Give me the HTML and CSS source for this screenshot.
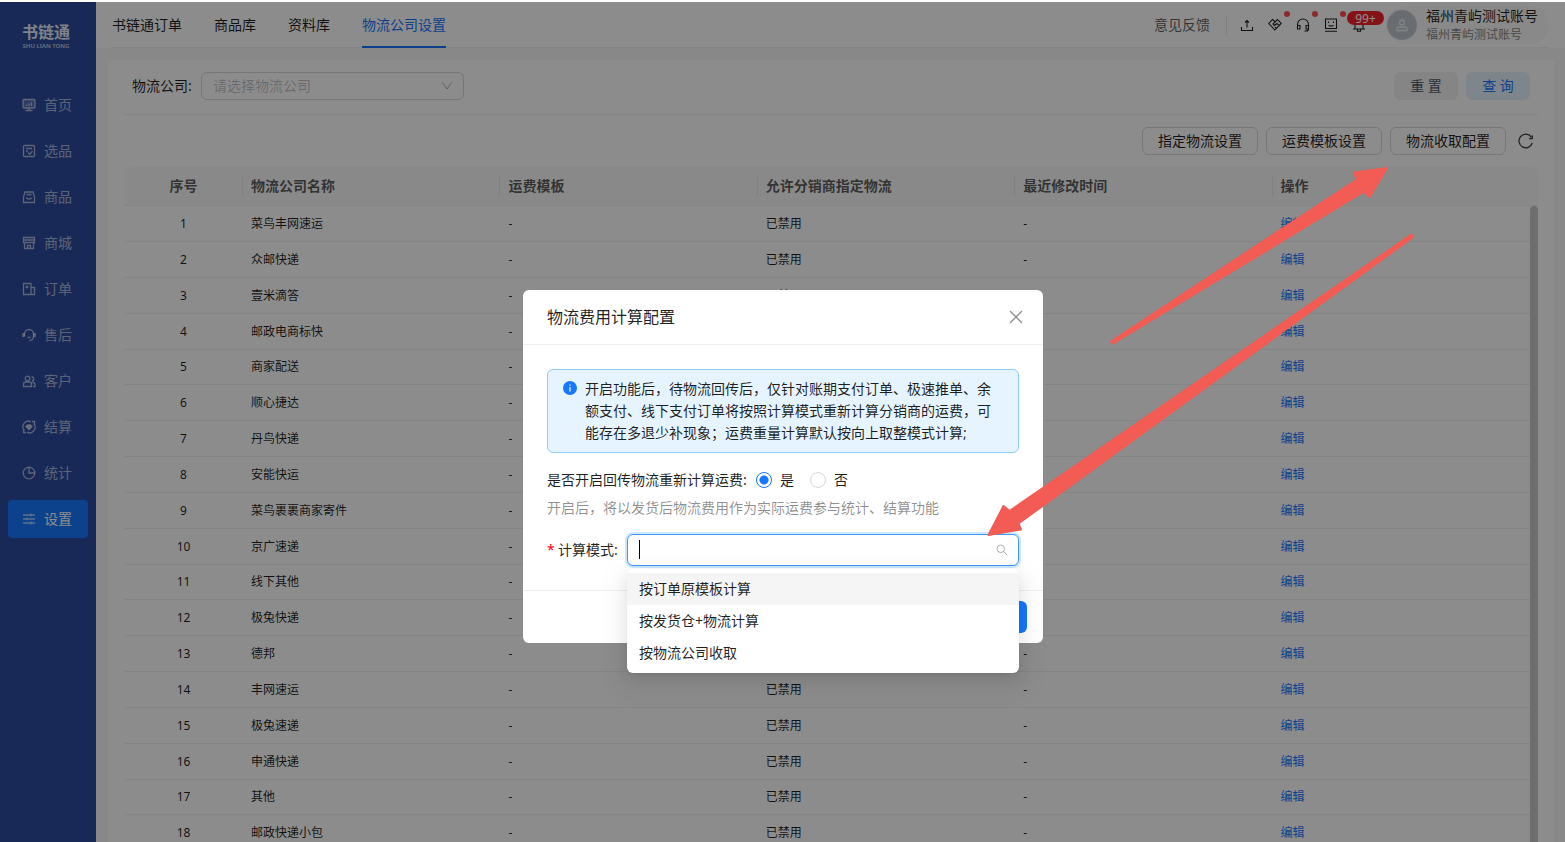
FILE: index.html
```html
<!DOCTYPE html>
<html lang="zh-CN">
<head>
<meta charset="utf-8">
<title>物流公司设置</title>
<link rel="stylesheet" href="styles.css">
</head>
<body>
<div class="app">
  <aside class="sidebar">
    <div class="logo"><span class="logo-name">书链通</span><span class="logo-sub">SHU LIAN TONG</span></div>
    <nav class="menu">
      <a class="menu-item" href="#"><svg class="menu-icon" viewBox="0 0 14 14"><rect x="1" y="1.500" width="12" height="8.500" rx="1" fill="currentColor" fill-opacity=".3"/><path d="M4.500 8V6.500M7 8V5.500M9.500 8V4M3.500 12.500h7M7 10v2.500"/></svg>首页</a>
      <a class="menu-item" href="#"><svg class="menu-icon" viewBox="0 0 14 14"><rect x="1.500" y="1.500" width="11" height="11" rx="1"/><path d="M4 4.500h6M4 7h2M6 8.500l1.800 1.800L10.500 7"/></svg>选品</a>
      <a class="menu-item" href="#"><svg class="menu-icon" viewBox="0 0 14 14"><path d="M3 2h8l1.500 5v5.500h-11V7zM4.500 7.500q0 1.500 2.500 1.500t2.500-1.500M4.500 4.500h5"/></svg>商品</a>
      <a class="menu-item" href="#"><svg class="menu-icon" viewBox="0 0 14 14"><path d="M1.500 6.500v-5h11v5zM1.500 4h11M2.500 6.500v6h9v-6M5.500 12.500V9.500h3v3"/></svg>商城</a>
      <a class="menu-item" href="#"><svg class="menu-icon" viewBox="0 0 14 14"><path d="M9 5.500v-4H1.500v11h11v-7H9v7M3.500 5h3M5 3.500v3"/></svg>订单</a>
      <a class="menu-item" href="#"><svg class="menu-icon" viewBox="0 0 14 14"><path d="M2.500 8V6a4.500 4.500 0 0 1 9 0v2c0 3-1.500 4.500-4 4.500M5.500 9q1.500 1 3 0"/><path d="M1.500 5v4M12.500 5v4" stroke-width="2.500"/></svg>售后</a>
      <a class="menu-item" href="#"><svg class="menu-icon" viewBox="0 0 14 14"><circle cx="5.500" cy="4.500" r="2.300"/><path d="M1.500 12.500V10q0-2 2-2h4q2 0 2 2v2.500zM9.500 3a2 2 0 0 1 .5 4M10.500 8.500q2.500 0 2.500 2v2h-2"/></svg>客户</a>
      <a class="menu-item" href="#"><svg class="menu-icon" viewBox="0 0 14 14"><path d="M2.500 10.500A5.500 5.500 0 0 1 9 1.800M11.500 3.500A5.500 5.500 0 0 1 5 12.200M1.500 9v3.500H4M12.500 5V1.500H10"/><path d="M5.500 5h3L10 6.500 7 9.500 4 6.500z" fill="currentColor"/></svg>结算</a>
      <a class="menu-item" href="#"><svg class="menu-icon" viewBox="0 0 14 14"><circle cx="7" cy="7" r="5.800"/><path d="M7 1.500V7h5.500"/></svg>统计</a>
      <a class="menu-item menu-item-active" href="#"><svg class="menu-icon menu-icon-soft" viewBox="0 0 14 14"><path d="M1 3h12M1 7h12M1 11h12M9 1.500v3M5 5.500v3M9 9.500v3"/></svg>设置</a>
    </nav>
  </aside>

  <div class="workspace">
    <header class="topbar">
      <nav class="tabs">
        <a class="tab" href="#">书链通订单</a>
        <a class="tab" href="#">商品库</a>
        <a class="tab" href="#">资料库</a>
        <a class="tab tab-active" href="#">物流公司设置</a>
      </nav>
      <div class="tools">
        <a class="feedback" href="#">意见反馈</a>
        <button class="tool" type="button" aria-label="上传"><svg viewBox="0 0 14 14"><path d="M1.500 9v3.500h11V9M7 9.500V2.500M5 4.500l2-2 2 2"/></svg></button>
        <button class="tool" type="button" aria-label="合作"><svg viewBox="0 0 14 14"><path d="M7 3.500L4.500 1.500.800 5.500l6 6.500 6.400-6.500-3.700-4L5 6l1.500 1.500L9 5.500l2.500 2.300M7 9l1.500 1.500"/></svg><span class="dot"></span></button>
        <button class="tool" type="button" aria-label="客服"><svg viewBox="0 0 14 14"><path d="M1.500 11V6.500a5.500 5.500 0 0 1 11 0V11q0 2-2.500 2H8.500M1.500 7.500H4V11H1.500zM10 7.500h2.500V11H10z"/></svg><span class="dot"></span></button>
        <button class="tool" type="button" aria-label="助手"><svg viewBox="0 0 14 14"><path d="M1.500 1h11v9.500h-11zM1 13.300h12M4.500 3.500v1.500M9.500 3.500v1.500M4.500 7.500q2.500 1 5 0"/></svg><span class="dot"></span></button>
        <button class="tool" type="button" aria-label="通知"><svg viewBox="0 0 14 14"><path d="M3 11V6a4 4 0 0 1 8 0v5M1 11h12M5.500 11v2.300h3V11"/></svg><span class="count">99+</span></button>
        <div class="account">
          <span class="avatar"><svg viewBox="0 0 14 14"><circle cx="7" cy="4.500" r="2.500"/><path d="M2 12.500v-1.500q0-2 2-2h6q2 0 2 2v1.500z"/></svg></span>
          <span class="account-text"><span class="account-name">福州青屿测试账号</span><span class="account-sub">福州青屿测试账号</span></span>
        </div>
      </div>
    </header>

    <main class="content">
      <section class="card">
        <form class="search">
          <label class="search-label" for="company">物流公司:</label>
          <span class="select-wrap">
            <select class="company-select" id="company"><option>请选择物流公司</option></select>
            <svg class="chevron" viewBox="0 0 12 12"><path d="M1.500 2.500L6 9l4.500-6.500"/></svg>
          </span>
          <span class="search-actions">
            <button class="btn btn-reset" type="reset">重 置</button>
            <button class="btn btn-query" type="button">查 询</button>
          </span>
        </form>
        <div class="toolbar">
          <button class="btn" type="button">指定物流设置</button>
          <button class="btn" type="button">运费模板设置</button>
          <button class="btn" type="button">物流收取配置</button>
          <button class="reload" type="button" aria-label="刷新"><svg viewBox="0 0 16 16"><path d="M14.300 10A6.800 6.800 0 1 1 13.200 3.800M14.300 2.200v3.300h-3.200"/></svg></button>
        </div>
        <div class="table-area">
          <table class="grid">
            <colgroup><col class="col-index"><col><col><col><col><col><col class="col-gutter"></colgroup>
            <thead><tr><th>序号</th><th>物流公司名称</th><th>运费模板</th><th>允许分销商指定物流</th><th>最近修改时间</th><th>操作</th><th></th></tr></thead>
            <tbody>
              <tr><td>1</td><td>菜鸟丰网速运</td><td>-</td><td>已禁用</td><td>-</td><td><a href="#">编辑</a></td><td></td></tr>
              <tr><td>2</td><td>众邮快递</td><td>-</td><td>已禁用</td><td>-</td><td><a href="#">编辑</a></td><td></td></tr>
              <tr><td>3</td><td>壹米滴答</td><td>-</td><td>已禁用</td><td>-</td><td><a href="#">编辑</a></td><td></td></tr>
              <tr><td>4</td><td>邮政电商标快</td><td>-</td><td>已禁用</td><td>-</td><td><a href="#">编辑</a></td><td></td></tr>
              <tr><td>5</td><td>商家配送</td><td>-</td><td>已禁用</td><td>-</td><td><a href="#">编辑</a></td><td></td></tr>
              <tr><td>6</td><td>顺心捷达</td><td>-</td><td>已禁用</td><td>-</td><td><a href="#">编辑</a></td><td></td></tr>
              <tr><td>7</td><td>丹鸟快递</td><td>-</td><td>已禁用</td><td>-</td><td><a href="#">编辑</a></td><td></td></tr>
              <tr><td>8</td><td>安能快运</td><td>-</td><td>已禁用</td><td>-</td><td><a href="#">编辑</a></td><td></td></tr>
              <tr><td>9</td><td>菜鸟裹裹商家寄件</td><td>-</td><td>已禁用</td><td>-</td><td><a href="#">编辑</a></td><td></td></tr>
              <tr><td>10</td><td>京广速递</td><td>-</td><td>已禁用</td><td>-</td><td><a href="#">编辑</a></td><td></td></tr>
              <tr><td>11</td><td>线下其他</td><td>-</td><td>已禁用</td><td>-</td><td><a href="#">编辑</a></td><td></td></tr>
              <tr><td>12</td><td>极兔快递</td><td>-</td><td>已禁用</td><td>-</td><td><a href="#">编辑</a></td><td></td></tr>
              <tr><td>13</td><td>德邦</td><td>-</td><td>已禁用</td><td>-</td><td><a href="#">编辑</a></td><td></td></tr>
              <tr><td>14</td><td>丰网速运</td><td>-</td><td>已禁用</td><td>-</td><td><a href="#">编辑</a></td><td></td></tr>
              <tr><td>15</td><td>极兔速递</td><td>-</td><td>已禁用</td><td>-</td><td><a href="#">编辑</a></td><td></td></tr>
              <tr><td>16</td><td>申通快递</td><td>-</td><td>已禁用</td><td>-</td><td><a href="#">编辑</a></td><td></td></tr>
              <tr><td>17</td><td>其他</td><td>-</td><td>已禁用</td><td>-</td><td><a href="#">编辑</a></td><td></td></tr>
              <tr><td>18</td><td>邮政快递小包</td><td>-</td><td>已禁用</td><td>-</td><td><a href="#">编辑</a></td><td></td></tr>
            </tbody>
          </table>
          <span class="scroll-thumb"></span>
        </div>
      </section>
    </main>
  </div>
</div>

<div class="mask">
  <div class="dialog" role="dialog" aria-labelledby="dialog-title">
    <div class="dialog-head">
      <h2 class="dialog-title" id="dialog-title">物流费用计算配置</h2>
      <button class="close" type="button" aria-label="关闭"><svg viewBox="0 0 14 14"><path d="M1 1l12 12M13 1L1 13"/></svg></button>
    </div>
    <div class="dialog-body">
      <div class="notice">
        <svg class="notice-icon" viewBox="0 0 14 14"><circle cx="7" cy="7" r="7" fill="#1677ff" stroke="none"/><path d="M7 6v4.500M7 3.500v1.300" stroke="#fff" stroke-width="1.200"/></svg>
        <p class="notice-text">开启功能后，待物流回传后，仅针对账期支付订单、极速推单、余额支付、线下支付订单将按照计算模式重新计算分销商的运费，可能存在多退少补现象；运费重量计算默认按向上取整模式计算;</p>
      </div>
      <div class="radio-row" role="radiogroup" aria-labelledby="recalc">
        <span class="radio-title" id="recalc">是否开启回传物流重新计算运费:</span>
        <label class="radio"><input type="radio" name="recalc" checked>是</label>
        <label class="radio"><input type="radio" name="recalc">否</label>
      </div>
      <p class="hint">开启后，将以发货后物流费用作为实际运费参与统计、结算功能</p>
      <div class="mode-row">
        <label class="mode-label" for="mode"><span class="required">*</span>计算模式:</label>
        <div class="mode-field">
          <input class="mode-input" id="mode" type="text" role="combobox" aria-expanded="true" aria-controls="mode-list">
          <span class="caret"></span>
          <svg class="search-icon" viewBox="0 0 12 12"><circle cx="4.800" cy="4.800" r="3.800"/><path d="M7.600 7.600L11.300 11.300"/></svg>
          <ul class="options" id="mode-list" role="listbox">
            <li class="option option-active" role="option">按订单原模板计算</li>
            <li class="option" role="option">按发货仓+物流计算</li>
            <li class="option" role="option">按物流公司收取</li>
          </ul>
        </div>
      </div>
    </div>
    <div class="dialog-foot"><button class="confirm" type="button" aria-label="确定"></button></div>
  </div>
</div>

<svg class="arrows" viewBox="0 0 1565 842" width="1565" height="842" aria-hidden="true">
  <path d="M1111 341.500L1357 179.500 1354 172.500 1387 168 1369.500 197 1364 191.500 1113 343.500z"/>
  <path d="M1411.500 234.500L1009.500 511 1003.500 506 988.500 535 1021 529.500 1018.500 523.500 1413 237z"/>
</svg>
</body>
</html>
```

FILE: styles.css
```css
* { box-sizing: border-box; }

body {
  margin: 0;
  height: 100vh;
  padding-top: 2px;
  overflow: hidden;
  position: relative;
  background: #fcfcfc;
  color: rgba(0, 0, 0, 0.88);
  font: 14px/22px "Noto Sans", "Noto Sans CJK SC", sans-serif;
}

a { color: inherit; text-decoration: none; }
button, input, select { font: inherit; color: inherit; margin: 0; }
button { padding: 0; border: 0; background: none; }
svg { display: block; fill: none; stroke: currentColor; }
p, h2, ul { margin: 0; padding: 0; }

.app { display: flex; height: 100%; background: #f7f7f7; }

/* Sidebar */
.sidebar { width: 96px; flex: none; background: #2c4ba0; color: rgba(255, 255, 255, 0.6); }
.logo {
  height: 80px;
  padding: 20px 4px 0 0;
  display: flex;
  flex-direction: column;
  align-items: center;
  color: #e8ebf4;
}
.logo-name { font-size: 16px; line-height: 21px; font-weight: 700; }
.logo-sub { font-size: 6px; line-height: 6px; font-weight: 600; opacity: 0.8; white-space: nowrap; }
.menu { display: flex; flex-direction: column; gap: 8px; padding: 4px 8px; }
.menu-item { display: flex; align-items: center; gap: 8px; height: 38px; padding-left: 14px; border-radius: 4px; }
.menu-item-active { background: #1677ff; color: #fff; }
.menu-icon { width: 14px; height: 14px; stroke-width: 1.3; }
.menu-icon-soft { opacity: 0.65; }

/* Top bar */
.workspace { flex: 1; min-width: 0; display: flex; flex-direction: column; }
.topbar {
  display: flex;
  justify-content: space-between;
  height: 46px;
  flex: none;
  padding: 0 16px;
  background: #fff;
}
.tabs { flex: 1; display: flex; gap: 32px; border-bottom: 1px solid #f0f0f0; }
.tab { height: 46px; line-height: 46px; }
.tab-active { color: #1677ff; border-bottom: 2px solid #1677ff; }
.tools { display: flex; align-items: center; border-bottom: 1px solid #f0f0f0; }
.feedback { color: rgba(0, 0, 0, 0.65); padding-right: 16px; margin-right: 6px; border-right: 1px solid #e6e6e6; line-height: 20px; }
.tool { position: relative; width: 28px; height: 28px; display: grid; place-items: center; }
.tool svg { width: 14px; height: 14px; stroke-width: 1.1; }
.dot { position: absolute; top: 0; right: -1px; width: 6px; height: 6px; border-radius: 50%; background: #ff4d4f; }
.count {
  position: absolute;
  top: 0;
  left: 2px;
  width: 37px;
  height: 14px;
  border-radius: 7px;
  background: #f5222d;
  color: #fff;
  font-size: 12px;
  line-height: 15px;
}
.account { display: flex; align-items: center; gap: 9px; width: 162px; height: 38px; margin-left: 14px; border-radius: 19px; background: #fafafa; }
.avatar { width: 30px; height: 30px; border-radius: 50%; background: #bfc7ce; color: #eee; display: grid; place-items: center; flex: none; }
.avatar svg { width: 14px; height: 14px; stroke-width: 1.3; }
.account-text { display: flex; flex-direction: column; white-space: nowrap; }
.account-name { line-height: 19px; }
.account-sub { font-size: 12px; line-height: 19px; color: rgba(0, 0, 0, 0.5); }

/* Search and toolbar */
.content { flex: 1; min-height: 0; padding: 12px 11px 0 12px; }
.card { height: 100%; padding: 12px 16px 0; background: #fff; }
.search { display: flex; align-items: center; padding: 0 8px 14px; border-bottom: 1px solid #f0f0f0; }
.search-label { width: 69px; }
.select-wrap { position: relative; width: 263px; }
.company-select {
  display: block;
  appearance: none;
  width: 100%;
  height: 28px;
  padding: 0 11px;
  border: 1px solid #d9d9d9;
  border-radius: 6px;
  background: #fff;
  color: rgba(0, 0, 0, 0.25);
}
.chevron { position: absolute; right: 11px; top: 8px; width: 12px; height: 12px; color: rgba(0, 0, 0, 0.3); }
.search-actions { display: flex; gap: 8px; margin-left: auto; }
.toolbar { display: flex; justify-content: flex-end; align-items: center; gap: 8px; padding: 12px 0; }
.btn { height: 28px; padding: 0 15px; border: 1px solid #d9d9d9; border-radius: 6px; background: #fff; line-height: 26px; }
.btn-reset { width: 64px; border-color: #f2f3f5; background: #f2f3f5; color: #4e5969; }
.btn-query { width: 64px; border-color: #e6f4ff; background: #e6f4ff; color: #1677ff; }
.reload { width: 24px; height: 24px; display: grid; place-items: center; color: rgba(0, 0, 0, 0.75); }
.reload svg { width: 16px; height: 16px; stroke-width: 1.3; }

/* Table */
.table-area { position: relative; height: 675px; overflow: hidden; }
.grid { width: 100%; table-layout: fixed; border-collapse: separate; border-spacing: 0; font-size: 12px; }
.col-index { width: 119px; }
.col-gutter { width: 8px; }
.grid th {
  height: 39px;
  padding: 0 8px;
  text-align: left;
  font-size: 14px;
  font-weight: 600;
  color: rgba(0, 0, 0, 0.65);
  border-bottom: 1px solid #f0f0f0;
  background: linear-gradient(#eaeaea, #eaeaea) right center / 1px 22px no-repeat #fafafa;
}
.grid th:nth-last-child(-n+2) { background: #fafafa; }
.grid th:first-child { border-top-left-radius: 6px; }
.grid th:last-child { border-top-right-radius: 6px; padding: 0; }
.grid td { height: 36px; padding: 0 8px; line-height: 20px; border-bottom: 1px solid #f0f0f0; }
.grid tr:nth-child(6n+5) td { height: 35px; }
.grid td:last-child { padding: 0; }
.grid th:first-child, .grid td:first-child { text-align: center; }
.grid td a { color: #1677ff; }
.scroll-thumb { position: absolute; right: 0; top: 39px; bottom: 0; width: 8px; border-radius: 4px 4px 0 0; background: #c8c8c8; }

/* Dialog */
.mask {
  position: absolute;
  inset: 2px 0 0 0;
  padding: 288px 0 0 1px;
  display: flex;
  justify-content: center;
  align-items: flex-start;
  background: rgba(0, 0, 0, 0.45);
}
.dialog { width: 520px; border-radius: 6px; background: #fff; }
.dialog-head { display: flex; align-items: center; justify-content: space-between; height: 55px; padding: 0 20px 0 24px; border-bottom: 1px solid #f0f0f0; }
.dialog-title { font-size: 16px; line-height: 24px; font-weight: 400; }
.close { width: 14px; height: 14px; color: rgba(0, 0, 0, 0.45); }
.close svg { width: 14px; height: 14px; stroke-width: 1.3; }
.dialog-body { padding: 24px; }
.notice { display: flex; gap: 8px; padding: 8px 15px; border: 1px solid #91caff; border-radius: 6px; background: #e6f4ff; }
.notice-icon { width: 14px; height: 14px; margin-top: 3px; flex: none; }
.radio-row { display: flex; align-items: center; height: 22px; margin-top: 16px; }
.radio-title { width: 209px; }
.radio { display: flex; align-items: center; gap: 8px; margin-right: 16px; }
.radio input { appearance: none; width: 16px; height: 16px; border: 1px solid #d9d9d9; border-radius: 50%; background: #fff; }
.radio input:checked { border-color: #1677ff; background: radial-gradient(circle, #1677ff 4px, #fff 5px); }
.hint { margin-top: 6px; color: rgba(0, 0, 0, 0.45); }
.mode-row { display: flex; align-items: center; margin-top: 15px; }
.mode-label { width: 80px; white-space: nowrap; }
.required { display: inline-block; width: 11px; color: #ff0000; }
.mode-field { position: relative; flex: 1; }
.mode-input {
  display: block;
  width: 100%;
  height: 32px;
  padding: 0 32px 0 11px;
  border: 1px solid #4096ff;
  border-radius: 6px;
  outline: none;
  background: #fff;
  box-shadow: 0 0 0 2px rgba(5, 145, 255, 0.2);
}
.caret { position: absolute; left: 12px; top: 6px; width: 1px; height: 19px; background: #000; }
.search-icon { position: absolute; right: 11px; top: 10px; width: 12px; height: 12px; color: rgba(0, 0, 0, 0.3); }
.options {
  position: absolute;
  z-index: 1;
  left: 0;
  right: 0;
  top: 35px;
  padding: 4px 0;
  list-style: none;
  border-radius: 6px;
  background: #fff;
  box-shadow: 0 6px 16px rgba(0, 0, 0, 0.08), 0 3px 6px -4px rgba(0, 0, 0, 0.12), 0 9px 28px 8px rgba(0, 0, 0, 0.05);
}
.option { height: 32px; padding: 5px 12px; }
.option-active { background: #f5f5f5; }
.dialog-foot { display: flex; justify-content: flex-end; padding: 10px 16px; border-top: 1px solid #f0f0f0; }
.confirm { width: 64px; height: 32px; border-radius: 6px; background: #1677ff; }

.arrows { position: absolute; left: 0; top: 0; fill: #f25c54; stroke: #f25c54; stroke-width: 2; stroke-linejoin: round; pointer-events: none; }
```
